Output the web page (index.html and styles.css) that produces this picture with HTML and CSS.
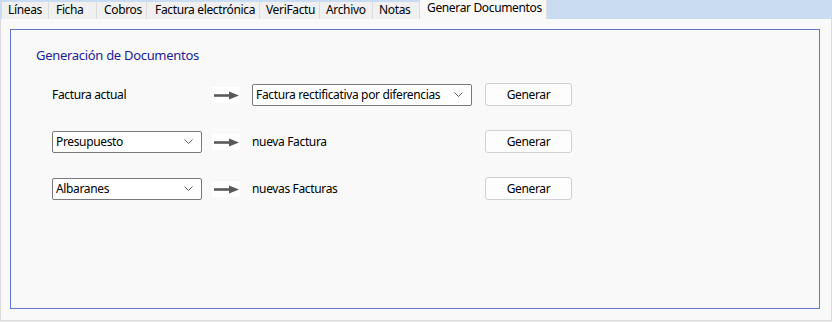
FILE: index.html
```html
<!DOCTYPE html>
<html lang="es">
<head>
<meta charset="utf-8">
<title>Generar Documentos</title>
<link rel="stylesheet" href="styles.css">
</head>
<body>
<div class="window">
  <div class="tabs">
    <div class="tab t-lineas">Líneas</div>
    <div class="tab t-ficha">Ficha</div>
    <div class="tab t-cobros">Cobros</div>
    <div class="tab t-fe">Factura electrónica</div>
    <div class="tab t-vf">VeriFactu</div>
    <div class="tab t-arch">Archivo</div>
    <div class="tab t-notas">Notas</div>
    <div class="tab active t-gen">Generar Documentos</div>
  </div>
  <div class="panel">
    <div class="group">
      <div class="group-title">Generación de Documentos</div>
      <div class="rows">
        <div class="label">Factura actual</div>
        <div class="arrow"><svg width="28" height="16" viewBox="0 0 28 16"><rect width="28" height="16" fill="#fff"/><path d="M2 8.5H19" stroke="#595959" stroke-width="2.6"/><path d="M17 4.5L27 8.5L17 12.5Z" fill="#595959"/></svg></div>
        <div class="select wide"><span>Factura rectificativa por diferencias</span><svg class="chev" width="9" height="6" viewBox="0 0 9 6"><path d="M0.5 0.5L4.5 4.5L8.5 0.5" fill="none" stroke="#606060" stroke-width="1"/></svg></div>
        <button class="btn">Generar</button>

        <div class="select"><span>Presupuesto</span><svg class="chev" width="9" height="6" viewBox="0 0 9 6"><path d="M0.5 0.5L4.5 4.5L8.5 0.5" fill="none" stroke="#606060" stroke-width="1"/></svg></div>
        <div class="arrow"><svg width="28" height="16" viewBox="0 0 28 16"><rect width="28" height="16" fill="#fff"/><path d="M2 8.5H19" stroke="#595959" stroke-width="2.6"/><path d="M17 4.5L27 8.5L17 12.5Z" fill="#595959"/></svg></div>
        <div class="label">nueva Factura</div>
        <button class="btn">Generar</button>

        <div class="select"><span>Albaranes</span><svg class="chev" width="9" height="6" viewBox="0 0 9 6"><path d="M0.5 0.5L4.5 4.5L8.5 0.5" fill="none" stroke="#606060" stroke-width="1"/></svg></div>
        <div class="arrow"><svg width="28" height="16" viewBox="0 0 28 16"><rect width="28" height="16" fill="#fff"/><path d="M2 8.5H19" stroke="#595959" stroke-width="2.6"/><path d="M17 4.5L27 8.5L17 12.5Z" fill="#595959"/></svg></div>
        <div class="label">nuevas Facturas</div>
        <button class="btn">Generar</button>
      </div>
    </div>
  </div>
</div>
</body>
</html>
```

FILE: styles.css
```css
* { box-sizing: border-box; }
html, body {
  margin: 0;
  padding: 0;
  width: 832px;
  height: 322px;
  overflow: hidden;
  background: #f0f0f0;
  font-family: "Noto Sans", "Open Sans", sans-serif;
  font-size: 12px;
  color: #000;
}
.window {
  display: flex;
  flex-direction: column;
  height: 322px;
}
.tabs {
  display: flex;
  align-items: flex-end;
  height: 19px;
  background: #c9dcf1;
  padding-left: 2px;
}
.tab {
  flex: none;
  height: 17px;
  line-height: 16px;
  padding: 0 0 0 6px;
  background: #f0f0f0;
  border-right: 1px solid #dcdcdc;
  white-space: nowrap;
  letter-spacing: -0.35px;
  overflow: hidden;
}
.t-lineas { width: 47px; }
.t-ficha { width: 48px; padding-left: 7px; }
.t-cobros { width: 50px; padding-left: 7px; }
.t-fe { width: 113px; padding-left: 8px; }
.t-vf { width: 60px; }
.t-arch { width: 53px; }
.t-notas { width: 47px; }
.tab.active {
  width: 127px;
  height: 19px;
  line-height: 16px;
  background: #f9f9f9;
  border-right: 1px solid #e2e2e2;
  padding-left: 7px;
}
.panel {
  flex: none;
  height: 302px;
  width: 832px;
  background: #f9f9f9;
  border: 1px solid #dcdcdc;
  border-top: none;
  padding: 10px 11px 12px 9px;
}
.group {
  height: 280px;
  border: 1px solid #6276d3;
  padding: 17px 0 0 25px;
}
.group-title {
  color: #1c1c98;
  font-size: 13px;
  line-height: 16px;
  letter-spacing: -0.3px;
}
.rows {
  display: grid;
  grid-template-columns: 150px 28px 222px 90px;
  column-gap: 10px;
  row-gap: 24px;
  margin-top: 20px;
  margin-left: 16px;
  align-items: center;
}
.rows > :nth-child(4n+3) { margin-left: 2px; }
.rows > :nth-child(4n) { margin-left: 3px; }
.label {
  line-height: 16px;
  letter-spacing: -0.35px;
  white-space: nowrap;
}
.arrow { height: 16px; }
.arrow svg { display: block; }
.select {
  height: 22px;
  background: #fff;
  border: 1px solid #7a7a7a;
  border-radius: 2px;
  display: flex;
  align-items: center;
  justify-content: space-between;
  padding: 0 8px 0 3px;
  white-space: nowrap;
  letter-spacing: -0.35px;
}
.chev { flex: none; }
.btn {
  height: 23px;
  width: 87px;
  background: #fdfdfd;
  border: 1px solid #d0d0d0;
  border-radius: 3px;
  font-family: inherit;
  font-size: 12px;
  color: #000;
  padding: 0;
  letter-spacing: -0.35px;
}
```
